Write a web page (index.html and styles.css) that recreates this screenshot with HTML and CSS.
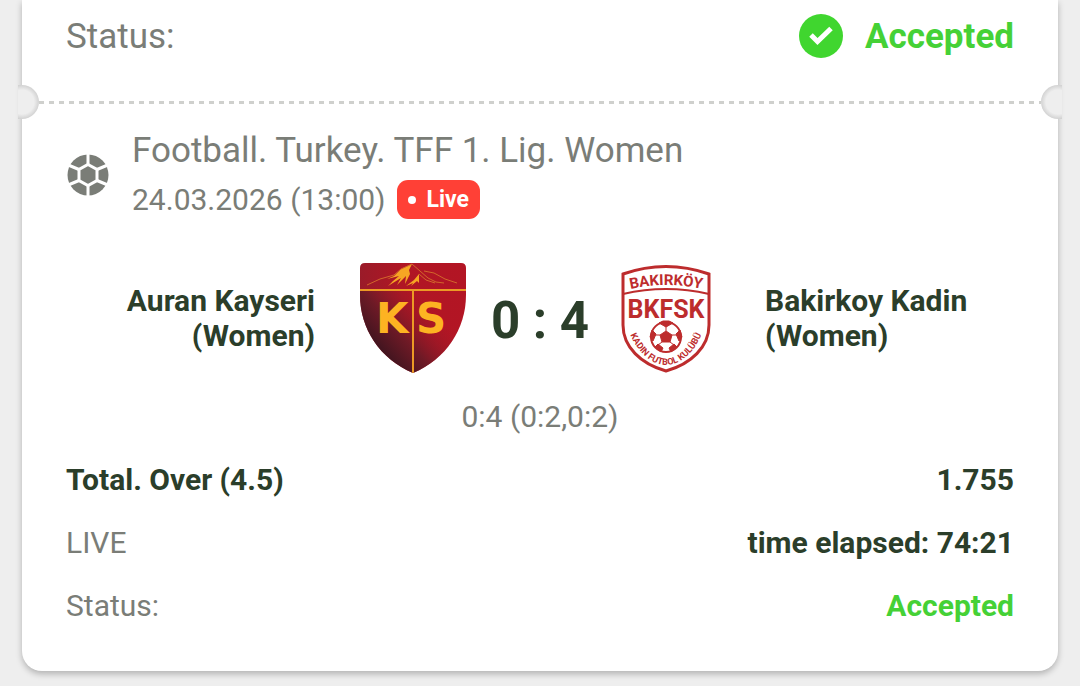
FILE: index.html
```html
<!doctype html>
<html lang="en">
<head>
  <meta charset="utf-8">
  <meta name="viewport" content="width=device-width, initial-scale=1">
  <title>Bet slip</title>
  <link rel="stylesheet" href="styles.css">
</head>
<body>

  <main class="ticket">
    <div class="ticket-status">
      <span class="label">Status:</span>
      <span class="accepted">
        <svg class="check-icon" viewBox="0 0 44 44" aria-hidden="true">
          <circle cx="22" cy="22" r="22" fill="#40d62f"/>
          <path d="M12 21L18.500 27.500L32 14.500" fill="none" stroke="#fff" stroke-width="5"/>
        </svg>
        Accepted
      </span>
    </div>

    <div class="tear-line">
      <span class="notch notch-left"></span>
      <span class="dashes"></span>
      <span class="notch notch-right"></span>
    </div>

    <section class="event">
      <header class="event-header">
        <svg class="sport-icon" viewBox="0 0 44 44" aria-hidden="true">
          <circle cx="22" cy="22" r="20.500" fill="#7a7d77"/>
          <g fill="none" stroke="#fff" stroke-width="3">
            <path d="M22 11.500L31 16.500V27.500L22 32.500L13 27.500V16.500Z"/>
            <path d="M22 11.500V0M22 32.500V44M31 16.500L43 11.500M31 27.500L43 32.500M13 16.500L1 11.500M13 27.500L1 32.500"/>
          </g>
        </svg>
        <div>
          <div class="league">Football. Turkey. TFF 1. Lig. Women</div>
          <div class="date">24.03.2026 (13:00) <span class="live-badge">Live</span></div>
        </div>
      </header>

      <div class="match">
        <div class="team team-home">Auran Kayseri<br>(Women)</div>
        <svg class="crest" viewBox="0 0 110 110" role="img" aria-label="Auran Kayseri">
          <defs>
            <linearGradient id="ksRed" x1="0" y1="0" x2="1" y2="0">
              <stop offset="0" stop-color="#991b29"/>
              <stop offset="0.400" stop-color="#b01624"/>
              <stop offset="1" stop-color="#b31524"/>
            </linearGradient>
            <linearGradient id="ksShade" gradientUnits="userSpaceOnUse" x1="20" y1="96" x2="76" y2="46">
              <stop offset="0" stop-color="#32131d"/>
              <stop offset="0.450" stop-color="#681a26" stop-opacity="0.900"/>
              <stop offset="1" stop-color="#a51828" stop-opacity="0"/>
            </linearGradient>
            <clipPath id="ksShield">
              <path d="M2 5Q2 0 7 0H103Q108 0 108 5V32C108 66 88 96 55 110C22 96 2 66 2 32Z"/>
            </clipPath>
          </defs>
          <g clip-path="url(#ksShield)">
            <rect width="110" height="110" fill="url(#ksRed)"/>
            <rect y="27" width="110" height="83" fill="url(#ksShade)"/>
            <path d="M0 27H110M55 27V110" stroke="#ec9a25" stroke-width="2"/>
          </g>
          <path d="M54 1L43 6L36 13L29 16L41 13L35 18L30 23L43 15L39 22L48 13L47 21L52 11L51 7Z" fill="#f6a623"/>
          <path d="M61 11L56 17L48 23L55 20L53 23L59 18L61 20Z" fill="#f6a623"/>
          <path d="M9 22L22 16L36 12L43 6L54 1L62 8L70 15L78 19L86 20M61 11L68 17L77 20M66 8L76 10L87 16L99 20" fill="none" stroke="#d2662a" stroke-width="1"/>
          <g class="crest-initials">
            <text x="18" y="70">K</text>
            <text x="58" y="70">S</text>
          </g>
        </svg>

        <div class="score">0 : 4</div>

        <svg class="crest" viewBox="1 0 110 110" role="img" aria-label="Bakirkoy Kadin">
          <defs>
            <path id="nameArc" d="M15 27Q55 17 95 27"/>
            <path id="clubArc" d="M16 62C22 84 38 102 55 102S88 84 94 62"/>
          </defs>
          <path d="M12 11Q55 -4 98 11V62C98 84 80 101 55 108C30 101 12 84 12 62Z" fill="#fff" stroke="#bd2c2d" stroke-width="3"/>
          <path d="M12 31Q55 21 98 31" fill="none" stroke="#bd2c2d" stroke-width="2"/>
          <g class="crest-text">
            <text class="crest-name" text-anchor="middle"><textPath href="#nameArc" startOffset="50%">BAKIRKÖY</textPath></text>
            <text class="crest-short" x="55" y="55" text-anchor="middle">BKFSK</text>
            <text class="crest-club" text-anchor="middle"><textPath href="#clubArc" startOffset="50%">KADIN FUTBOL KULÜBÜ</textPath></text>
          </g>
          <circle cx="55" cy="74" r="15" fill="#fff" stroke="#bd2c2d" stroke-width="2"/>
          <g fill="#bd2c2d" stroke="#bd2c2d" stroke-width="1">
            <path d="M55 68L61 72L59 79H51L49 72Z"/>
            <path d="M48 60L55 64L62 60L58 58H52ZM69 67L65 71L68 78L71 74ZM41 67L45 71L42 78L39 74ZM44 84L47 81L52 85L50 89ZM66 84L63 81L58 85L60 89Z"/>
            <path d="M55 68V63M61 72H66M59 79L63 82M51 79L47 82M49 72H44" fill="none"/>
          </g>
        </svg>
        <div class="team">Bakirkoy Kadin<br>(Women)</div>
      </div>

      <div class="periods">0:4 (0:2,0:2)</div>

      <div class="row strong">
        <span>Total. Over (4.5)</span>
        <span>1.755</span>
      </div>
      <div class="row">
        <span class="label">LIVE</span>
        <span class="strong">time elapsed: 74:21</span>
      </div>
      <div class="row">
        <span class="label">Status:</span>
        <span class="accepted">Accepted</span>
      </div>
    </section>
  </main>

</body>
</html>
```
FILE: styles.css
```css
body {
  margin: 0;
  background-color: #eeeeee;
  font-family: Roboto, sans-serif;
  font-size: 30px;
  color: #2b3e2a;
}

.ticket {
  margin: 0 22px 15px;
  padding-bottom: 34px;
  background-color: #fff;
  border-radius: 0 0 20px 20px;
  box-shadow: 0 3px 6px rgba(0, 0, 0, 0.25);
}

.label {
  color: #7a7d77;
}

.strong {
  font-weight: bold;
}

.accepted {
  display: flex;
  align-items: center;
  gap: 22px;
  font-weight: bold;
  color: #45d136;
}

.ticket-status {
  display: flex;
  justify-content: space-between;
  align-items: center;
  height: 72px;
  padding: 0 44px;
  font-size: 35px;
}

.check-icon {
  width: 44px;
  height: 44px;
}

/* perforation with a half circle cut out at each end */
.tear-line {
  display: flex;
  align-items: center;
  margin: 13px -4px 0;
}

.notch {
  width: 21px;
  height: 34px;
}

.notch-left {
  border-radius: 0 17px 17px 0;
  background: radial-gradient(circle at 4px 50%, #eeeeee 12px, #d2d2d2 17px);
}

.notch-right {
  border-radius: 17px 0 0 17px;
  background: radial-gradient(circle at 17px 50%, #eeeeee 12px, #d2d2d2 17px);
}

.dashes {
  flex: 1;
  height: 3px;
  background: repeating-linear-gradient(to right, #cfd0cd 0 5px, transparent 5px 10px);
}

.event {
  padding: 7px 44px 0;
}

.event-header {
  display: flex;
  align-items: center;
  gap: 22px;
  color: #7a7d77;
  line-height: 49px;
}

.sport-icon {
  width: 44px;
  height: 44px;
}

.league {
  font-size: 35px;
}

.date {
  display: flex;
  align-items: center;
  gap: 11px;
}

.live-badge {
  display: flex;
  align-items: center;
  gap: 11px;
  padding: 0 11px;
  border-radius: 11px;
  background-color: #ff4036;
  color: #fff;
  font-size: 23px;
  font-weight: bold;
  line-height: 39px;
}

.live-badge::before {
  content: "";
  width: 8px;
  height: 8px;
  border-radius: 50%;
  background-color: #fff;
}

.match {
  display: grid;
  grid-template-columns: 1fr 110px 144px 110px 1fr;
  align-items: center;
  margin-top: 39px;
}

.team {
  padding: 0 43px;
  font-weight: bold;
  line-height: 35px;
}

.team-home {
  text-align: right;
}

.crest {
  width: 110px;
  height: 110px;
}

.crest-initials {
  font-family: "DejaVu Sans", sans-serif;
  font-size: 42px;
  font-weight: bold;
  fill: #fdb322;
}

.crest-text {
  font-weight: bold;
  fill: #bd2c2d;
}

.crest-name {
  font-size: 15px;
}

.crest-short {
  font-size: 25px;
}

.crest-club {
  font-size: 9px;
}

.score {
  padding-top: 4px;
  font-size: 51px;
  font-weight: bold;
  text-align: center;
}

.periods {
  margin-top: 12px;
  line-height: 63px;
  text-align: center;
  color: #7a7d77;
}

.row {
  display: flex;
  justify-content: space-between;
  line-height: 63px;
}
```
